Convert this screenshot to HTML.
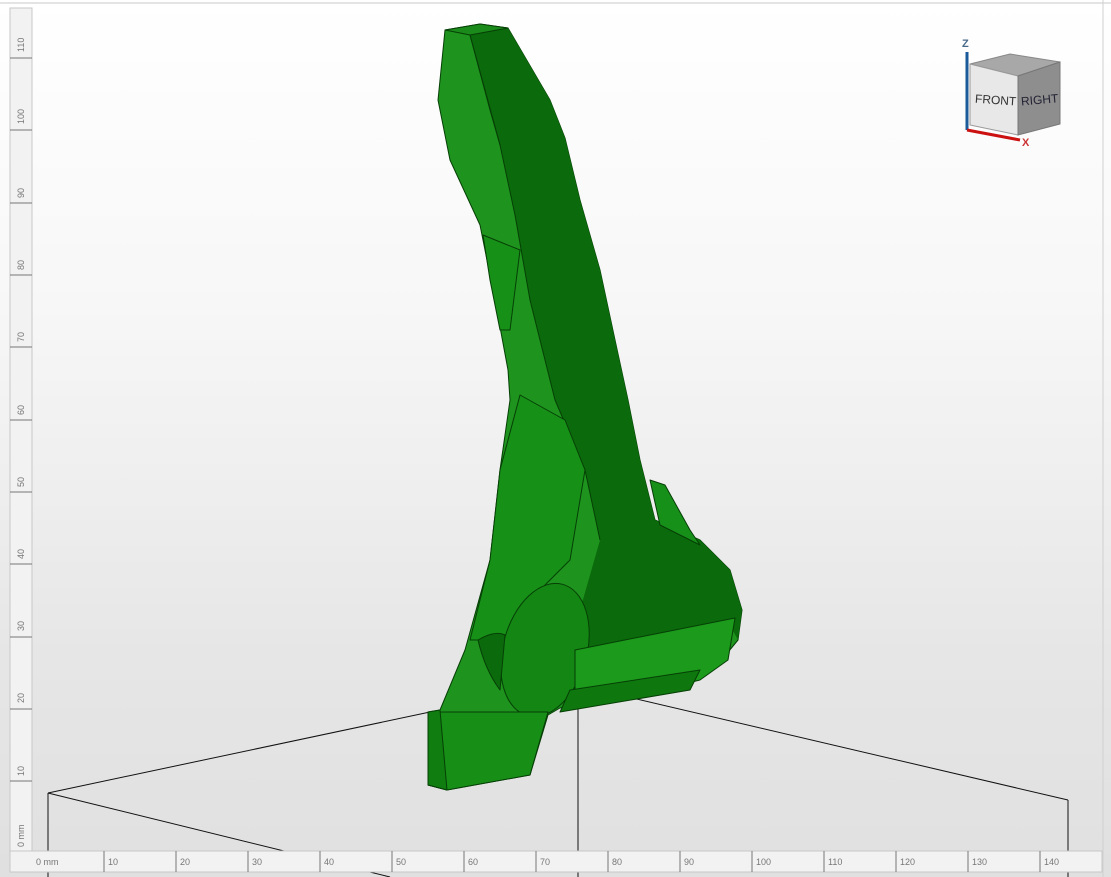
<!DOCTYPE html>
<html><head><style>
html,body{margin:0;padding:0;}
body{width:1111px;height:877px;overflow:hidden;position:relative;font-family:"Liberation Sans",sans-serif;
background:linear-gradient(#ffffff 0%,#f7f7f7 35%,#e6e6e6 75%,#e0e0e0 100%);}
svg{position:absolute;left:0;top:0;}
</style></head><body>
<svg width="1111" height="877" viewBox="0 0 1111 877">
<line x1="0" y1="3" x2="1111" y2="3" stroke="#c8c8c8"/>
<line x1="1103" y1="0" x2="1103" y2="877" stroke="#d0d0d0"/>
<!-- box lines -->
<g stroke="#111" stroke-width="1" fill="none">
<line x1="48" y1="793" x2="430" y2="712"/>
<line x1="48" y1="793" x2="390" y2="877"/>
<line x1="48" y1="793" x2="48" y2="877"/>
<line x1="578" y1="700" x2="578" y2="877"/>
<line x1="628" y1="697" x2="1068" y2="800"/>
<line x1="1068" y1="800" x2="1068" y2="877"/>
</g>
<!-- shape -->
<g stroke="#063f06" stroke-width="1" stroke-linejoin="round">
<!-- base light -->
<polygon fill="#1e941e" points="445,30 480,24 508,28 550,100 565,138 580,200 600,270 615,340 628,400 640,460 655,520 700,540 730,570 742,610 738,640 715,668 690,683 660,690 640,695 560,708 548,715 530,775 447,790 428,785 428,712 440,710 465,650 490,560 500,470 510,400 508,370 495,300 480,225 450,160 438,100"/>
<!-- dark face -->
<polygon fill="#0b6a0b" stroke="none" points="470,35 508,28 550,100 565,138 580,200 600,270 615,340 628,400 640,460 655,520 700,540 730,570 742,610 738,640 730,625 700,640 600,660 580,690 560,700 580,610 600,540 585,470 555,400 530,300 515,215 500,145 490,110"/>
<line x1="470" y1="35" x2="490" y2="110"/><line x1="490" y1="110" x2="500" y2="145"/>
<polyline fill="none" points="470,35 500,145 515,215 530,300 555,400 585,470 600,540"/>
<!-- top face -->
<polygon fill="#1a8a1a" points="445,30 480,24 508,28 470,35"/>
<!-- lattice left -->
<polygon fill="#179017" points="520,395 565,420 585,470 570,560 520,610 505,640 470,640 490,560 500,470"/>
<polygon fill="#179017" points="483,235 520,250 510,330 500,330 490,280"/>
<polygon fill="#17901a" points="650,480 665,485 690,530 700,545 660,525"/>
<!-- bulb -->
<ellipse cx="545" cy="650" rx="42" ry="68" fill="#138613" transform="rotate(15 545 650)"/>
<path d="M478,640 Q495,630 505,635 L500,690 Q485,670 478,640Z" fill="#0b6a0b"/>
<!-- bottom slots -->
<polygon fill="#1b9a1b" points="575,650 735,618 728,660 700,680 660,690 575,700"/>
<polygon fill="#0e780e" points="570,690 700,670 690,690 560,712"/>
<!-- lower block -->
<polygon fill="#178f17" points="428,712 470,712 510,712 548,712 530,775 447,790 428,785"/>
<polygon fill="#0f7d0f" points="428,712 440,710 447,790 428,785"/>
</g>
<!-- left ruler -->
<rect x="10" y="8" width="22" height="843" fill="#f2f2f2" stroke="#c8c8c8"/>
<g stroke="#777" stroke-width="1">
<line x1="10" y1="58" x2="32" y2="58"/><line x1="10" y1="130" x2="32" y2="130"/><line x1="10" y1="203" x2="32" y2="203"/><line x1="10" y1="275" x2="32" y2="275"/><line x1="10" y1="347" x2="32" y2="347"/><line x1="10" y1="420" x2="32" y2="420"/><line x1="10" y1="492" x2="32" y2="492"/><line x1="10" y1="564" x2="32" y2="564"/><line x1="10" y1="637" x2="32" y2="637"/><line x1="10" y1="709" x2="32" y2="709"/><line x1="10" y1="781" x2="32" y2="781"/>
</g>
<g font-size="9" fill="#777">
<text transform="translate(24,52) rotate(-90)">110</text>
<text transform="translate(24,124) rotate(-90)">100</text>
<text transform="translate(24,198) rotate(-90)">90</text>
<text transform="translate(24,270) rotate(-90)">80</text>
<text transform="translate(24,342) rotate(-90)">70</text>
<text transform="translate(24,415) rotate(-90)">60</text>
<text transform="translate(24,487) rotate(-90)">50</text>
<text transform="translate(24,559) rotate(-90)">40</text>
<text transform="translate(24,631) rotate(-90)">30</text>
<text transform="translate(24,703) rotate(-90)">20</text>
<text transform="translate(24,776) rotate(-90)">10</text>
<text transform="translate(24,847) rotate(-90)">0 mm</text>
</g>
<!-- bottom ruler -->
<rect x="10" y="851" width="1092" height="21" fill="#f2f2f2" stroke="#c8c8c8"/>
<g font-size="9" fill="#777">
<text x="36" y="865">0 mm</text><text x="108" y="865">10</text><text x="180" y="865">20</text><text x="252" y="865">30</text><text x="324" y="865">40</text><text x="396" y="865">50</text><text x="468" y="865">60</text><text x="540" y="865">70</text><text x="612" y="865">80</text><text x="684" y="865">90</text><text x="756" y="865">100</text><text x="828" y="865">110</text><text x="900" y="865">120</text><text x="972" y="865">130</text><text x="1044" y="865">140</text>
</g>
<g stroke="#777">
<line x1="104" y1="851" x2="104" y2="872"/><line x1="176" y1="851" x2="176" y2="872"/><line x1="248" y1="851" x2="248" y2="872"/><line x1="320" y1="851" x2="320" y2="872"/><line x1="392" y1="851" x2="392" y2="872"/><line x1="464" y1="851" x2="464" y2="872"/><line x1="536" y1="851" x2="536" y2="872"/><line x1="608" y1="851" x2="608" y2="872"/><line x1="680" y1="851" x2="680" y2="872"/><line x1="752" y1="851" x2="752" y2="872"/><line x1="824" y1="851" x2="824" y2="872"/><line x1="896" y1="851" x2="896" y2="872"/><line x1="968" y1="851" x2="968" y2="872"/><line x1="1040" y1="851" x2="1040" y2="872"/>
</g>
<!-- view cube -->
<polygon points="970,64 1010,54 1060,62 1018,76" fill="#a8a8a8" stroke="#888"/>
<polygon points="970,64 1018,76 1018,135 970,125" fill="#e8e8e8" stroke="#999"/>
<polygon points="1018,76 1060,62 1060,124 1018,135" fill="#8e8e8e" stroke="#777"/>
<text x="975" y="104" font-size="12" fill="#333" transform="rotate(4 994 100)">FRONT</text>
<text x="1021" y="104" font-size="12" fill="#223" transform="rotate(-5 1038 100)">RIGHT</text>
<line x1="967" y1="52" x2="967" y2="130" stroke="#1a5a9a" stroke-width="3"/>
<line x1="967" y1="130" x2="1020" y2="140" stroke="#cc1111" stroke-width="3"/>
<text x="962" y="47" font-size="11" font-weight="bold" fill="#4a6a8a">Z</text>
<text x="1022" y="146" font-size="11" font-weight="bold" fill="#cc3333">X</text>
</svg>
</body></html>
